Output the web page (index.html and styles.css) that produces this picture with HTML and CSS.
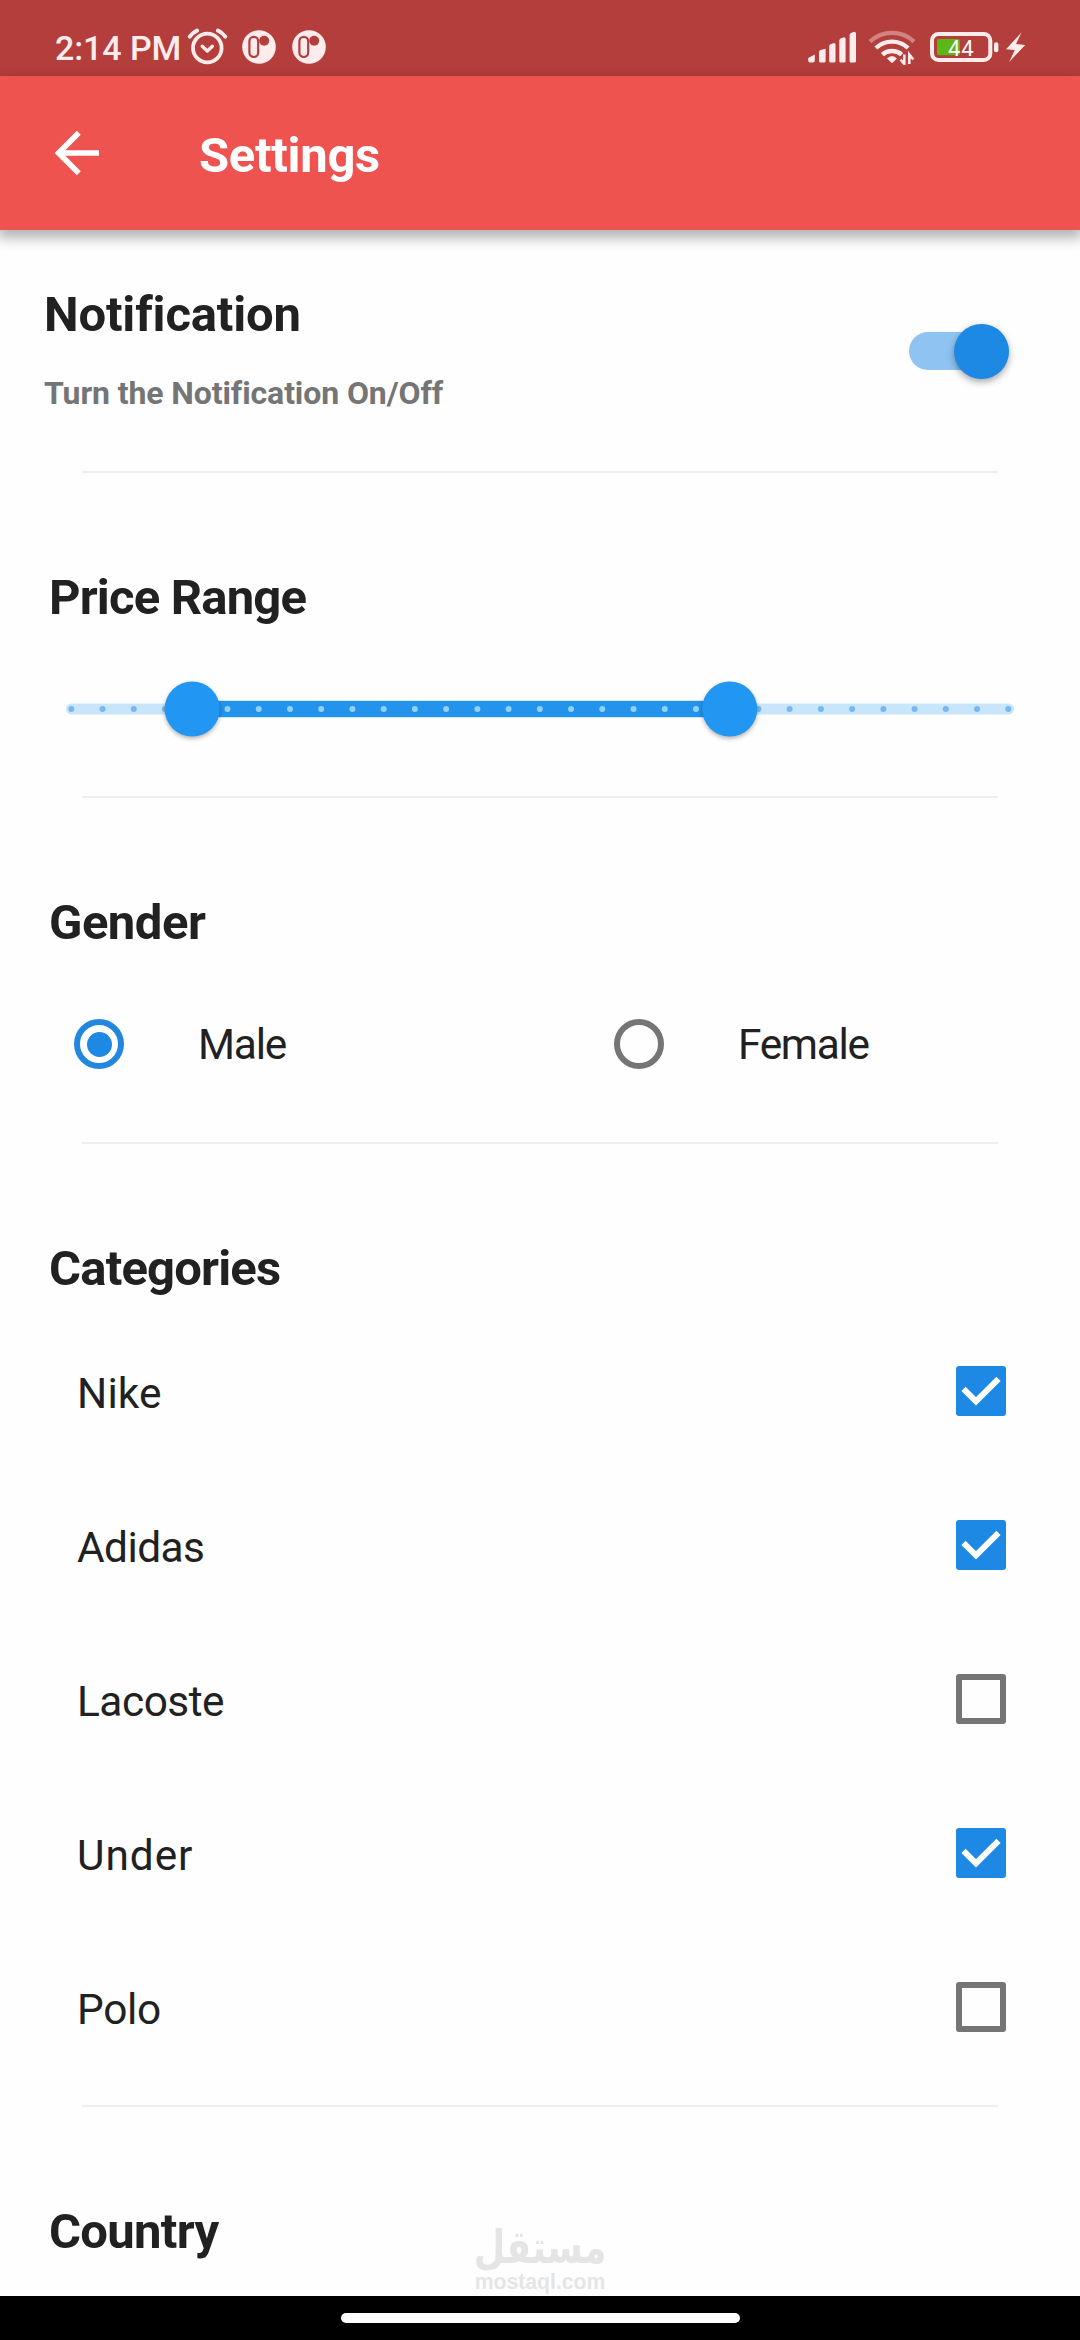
FILE: index.html
```html
<!DOCTYPE html>
<html lang="en">
<head>
<meta charset="utf-8">
<title>Settings</title>
<link rel="stylesheet" href="styles.css">
</head>
<body>
<div class="screen">
  <div class="status-bar">
    <div class="status-left">
      <span class="clock">2:14 PM</span>
      <svg class="alarm" width="42" height="38" viewBox="187 28 42 38" fill="none" stroke="currentColor" stroke-linecap="round" stroke-linejoin="round">
        <circle cx="207.3" cy="48" r="14.3" stroke-width="3.8"/>
        <path d="M189.8 36.6Q192.6 32.5 197 30.6M225.2 36.6Q222.4 32.5 218 30.6" stroke-width="4"/>
        <path d="M202.2 46.2L207.3 50.9L212.4 46.2" stroke-width="3.4"/>
      </svg>
      <svg class="app-dot" width="34" height="34" viewBox="0 0 34 34">
        <circle cx="17" cy="17" r="16.8" fill="currentColor"/>
        <rect x="7.4" y="6.8" width="8.8" height="20.2" rx="4.4" fill="none" stroke="#b33e3b" stroke-width="2.2"/>
        <circle cx="22.2" cy="10.7" r="5" fill="#b33e3b"/>
      </svg>
      <svg class="app-dot" width="34" height="34" viewBox="0 0 34 34">
        <circle cx="17" cy="17" r="16.8" fill="currentColor"/>
        <rect x="7.4" y="6.8" width="8.8" height="20.2" rx="4.4" fill="none" stroke="#b33e3b" stroke-width="2.2"/>
        <circle cx="22.2" cy="10.7" r="5" fill="#b33e3b"/>
      </svg>
    </div>
    <div class="status-right">
      <svg width="49" height="32" viewBox="808 31.5 49 32" fill="currentColor">
        <path d="M808.2 58.5L814.8 55V61.3Q814.8 63 813 63H810Q808.2 63 808.2 61.3Z"/>
        <path d="M819 52.5Q819 51 820.5 50.5L825.6 49.3V61.5Q825.6 63 824 63H820.5Q819 63 819 61.5Z"/>
        <path d="M829.2 47Q829.2 45.5 830.5 44.8L834 43.5Q835.5 43.5 835.5 45V61.5Q835.5 63 834 63H830.7Q829.2 63 829.2 61.5Z"/>
        <path d="M839.3 41Q839.3 39.8 840.5 39L844 37.8Q845.6 37.8 845.6 39.3V61.5Q845.6 63 844 63H840.8Q839.3 63 839.3 61.5Z"/>
        <path d="M849.6 35.5Q849.6 34.3 850.8 33.5L854 32.3Q856 32.3 856 34V61.5Q856 63 854.5 63H851Q849.6 63 849.6 61.5Z"/>
      </svg>
      <svg class="wifi" width="48" height="36" viewBox="868 30 48 36" fill="none" stroke="currentColor" stroke-width="4.4">
        <path d="M870 42.6A32 32 0 0 1 914 42.6" opacity=".4"/>
        <path d="M875.9 49A23.5 23.5 0 0 1 908.1 49"/>
        <path d="M882.3 55.6A14.8 14.8 0 0 1 901.7 55.6"/>
        <path d="M887 59.5Q892 54.5 897 59.5L892 64.2Z" fill="currentColor" stroke="none"/>
        <path d="M904.3 55.5V65L900.5 60.5M909.3 65V55.5L913.3 60.5" stroke-width="2.6"/>
      </svg>
      <svg class="battery" width="70" height="32" viewBox="929 31 70 32">
        <rect x="932" y="34" width="58.3" height="26" rx="6.5" fill="none" stroke="currentColor" stroke-width="4"/>
        <rect x="937" y="39" width="23" height="16.3" rx="2" fill="#5cb615"/>
        <rect x="994" y="42.3" width="4.4" height="10" rx="2.1" fill="currentColor"/>
        <text class="battery-level" x="948" y="55.7">44</text>
      </svg>
      <svg class="bolt" width="21" height="32" viewBox="1005 31.5 21 32" fill="currentColor">
        <path d="M1021.6 32.8L1006 49.8L1014.8 50.6L1009.2 62.4L1025.2 45.4L1016 44.6Z"/>
      </svg>
    </div>
  </div>

  <header class="app-bar">
    <svg class="back" width="46" height="46" viewBox="0 0 46 46" fill="none" stroke="#fff" stroke-width="5.6">
      <path d="M24.8 2.8L4.6 23L24.8 43.2M5 23H45"/>
    </svg>
    <h1 class="app-title">Settings</h1>
  </header>

  <main class="content">
    <section class="notification">
      <div class="notification-text">
        <h2 class="heading heading-notification">Notification</h2>
        <p class="subtitle">Turn the Notification On/Off</p>
      </div>
      <div class="switch"><div class="switch-thumb"></div></div>
    </section>
    <hr class="divider">

    <section class="section">
      <h2 class="heading heading-price">Price Range</h2>
      <svg class="slider" width="950" height="70" viewBox="65 674 950 70">
        <rect x="66" y="703.4" width="948" height="11.2" rx="5.6" fill="#c9e5fb"/>
        <path d="M71.3 709H1009" class="ticks ticks-inactive"/>
        <rect x="192" y="700.8" width="538" height="16.4" fill="#2393ec"/>
        <path d="M227.5 709H727" class="ticks ticks-active"/>
        <circle class="slider-thumb" cx="192.2" cy="709" r="27.6"/>
        <circle class="slider-thumb" cx="729.7" cy="709" r="27.6"/>
      </svg>
    </section>
    <hr class="divider">

    <section class="section">
      <h2 class="heading heading-gender">Gender</h2>
      <div class="radios">
        <div class="radio-option">
          <span class="radio radio-on"></span>
          <span class="label label-male">Male</span>
        </div>
        <div class="radio-option">
          <span class="radio"></span>
          <span class="label label-female">Female</span>
        </div>
      </div>
    </section>
    <hr class="divider">

    <section class="section">
      <h2 class="heading heading-categories">Categories</h2>
      <div class="categories">
        <div class="category">
          <span class="label label-nike">Nike</span>
          <span class="checkbox checked"><svg width="50" height="50" viewBox="0 0 50 50"><path d="M7.5 22.8L20 35.3L42.5 12.8"/></svg></span>
        </div>
        <div class="category">
          <span class="label label-adidas">Adidas</span>
          <span class="checkbox checked"><svg width="50" height="50" viewBox="0 0 50 50"><path d="M7.5 22.8L20 35.3L42.5 12.8"/></svg></span>
        </div>
        <div class="category">
          <span class="label label-lacoste">Lacoste</span>
          <span class="checkbox"></span>
        </div>
        <div class="category">
          <span class="label label-under">Under</span>
          <span class="checkbox checked"><svg width="50" height="50" viewBox="0 0 50 50"><path d="M7.5 22.8L20 35.3L42.5 12.8"/></svg></span>
        </div>
        <div class="category">
          <span class="label label-polo">Polo</span>
          <span class="checkbox"></span>
        </div>
      </div>
    </section>
    <hr class="divider">

    <section class="section">
      <h2 class="heading heading-country">Country</h2>
    </section>
  </main>

  <nav class="nav-bar"><div class="nav-pill"></div></nav>

  <div class="watermark">
    <div class="watermark-ar" lang="ar" dir="rtl">مستقل</div>
    <div class="watermark-en">mostaql.com</div>
  </div>
</div>
</body>
</html>
```
FILE: styles.css
```css
* { box-sizing: border-box; }

body {
  margin: 0;
  font-family: Roboto, "Liberation Sans", sans-serif;
  color: #212121;
  background: #fefefe;
}

svg { display: block; flex: none; }
h1, h2, p { margin: 0; }

.screen {
  position: relative;
  display: flex;
  flex-direction: column;
  width: 1080px;
  height: 2340px;
  overflow: hidden;
}

/* Status bar */
.status-bar {
  flex: none;
  display: flex;
  justify-content: space-between;
  align-items: center;
  height: 76px;
  padding: 18px 54px 0 55px;
  background: #b33e3b;
  color: #fdeceb;
}
.status-left, .status-right { display: flex; align-items: center; }
.clock {
  width: 132px;
  font-size: 34px;
  font-weight: 500;
  line-height: 40px;
  letter-spacing: -.1px;
  padding-top: 2px;
  white-space: nowrap;
}
.app-dot { margin-left: 13px; }
.app-dot + .app-dot { margin-left: 16px; }
.wifi { margin-left: 11px; }
.battery { margin-left: 13px; }
.bolt { margin-left: 6px; }
.battery-level { font-size: 22px; font-weight: 400; fill: #fff; letter-spacing: 1px; }

/* App bar */
.app-bar {
  position: relative;
  flex: none;
  display: flex;
  align-items: center;
  height: 154px;
  padding-left: 54px;
  background: #ef5350;
  box-shadow: 0 6px 12px 2px rgba(0, 0, 0, .3);
}
.app-title {
  margin-left: 99px;
  padding-top: 5px;
  font-size: 49px;
  line-height: 60px;
  font-weight: 700;
  letter-spacing: -.3px;
  color: #fff;
}

/* Content */
.content { flex: 1; min-height: 0; overflow: hidden; }
.divider { height: 2px; margin: 0 82px; border: 0; background: #eee; }
.section { padding-top: 95px; }
.heading {
  padding-left: 49px;
  font-size: 49px;
  line-height: 60px;
  font-weight: 700;
}
.notification {
  display: flex;
  justify-content: space-between;
  align-items: flex-start;
  height: 241px;
  padding: 55px 71px 0 44px;
}
.heading-notification { padding-left: 0; letter-spacing: -.15px; }
.subtitle {
  margin-top: 24px;
  font-size: 32px;
  line-height: 48px;
  font-weight: 700;
  letter-spacing: -.1px;
  color: #757575;
}
.heading-price { letter-spacing: -.83px; }
.heading-gender { letter-spacing: -.5px; }
.heading-categories { letter-spacing: -.82px; }
.heading-country { letter-spacing: -.7px; }

.switch {
  display: flex;
  align-items: center;
  justify-content: flex-end;
  width: 100px;
  height: 38px;
  margin-top: 47px;
  border-radius: 19px;
  background: #8fc4f2;
}
.switch-thumb {
  flex: none;
  width: 55px;
  height: 55px;
  border-radius: 50%;
  background: #1e88e5;
  box-shadow: 0 3px 7px rgba(0, 0, 0, .35);
}

.slider { margin: 46px 0 52px 65px; }
.ticks { fill: none; stroke-width: 6; stroke-linecap: round; stroke-dasharray: 0 31.233; }
.ticks-inactive { stroke: #78b8ee; }
.ticks-active { stroke: #90d2fb; }
.slider-thumb { fill: #2196f3; filter: drop-shadow(0 2px 2px rgba(0, 0, 0, .3)); }

.radios { display: grid; grid-template-columns: 540px 540px; padding: 60px 0 67px; }
.radio-option { display: flex; align-items: center; height: 62px; padding-left: 74px; }
.radio {
  display: grid;
  place-items: center;
  width: 50px;
  height: 50px;
  margin-right: 74px;
  border: 6px solid #757575;
  border-radius: 50%;
}
.radio-on { border-color: #2386df; }
.radio-on::after { content: ""; width: 25px; height: 25px; border-radius: 50%; background: #1e88e5; }
.radio-option .label { padding-top: 1px; }

.label { font-size: 42.4px; line-height: 54px; }
.label-male { letter-spacing: -1.2px; }
.label-female { letter-spacing: -1.3px; }
.label-nike { letter-spacing: .14px; }
.label-adidas { letter-spacing: -.55px; }
.label-lacoste { letter-spacing: -.48px; }
.label-under { letter-spacing: .95px; }
.label-polo { letter-spacing: -.3px; }

.categories { padding: 15px 0 21px; }
.category {
  display: flex;
  align-items: center;
  justify-content: space-between;
  height: 154px;
  padding: 0 74px 0 77px;
}
.category .label { padding-top: 5px; }
.checkbox { width: 50px; height: 50px; border: 6px solid #757575; border-radius: 3px; }
.checked { border: 0; background: #1e88e5; }
.checked path { fill: none; stroke: #fff; stroke-width: 6; }

/* Gesture bar */
.nav-bar {
  flex: none;
  display: flex;
  justify-content: center;
  height: 44px;
  padding-top: 17px;
  background: #000;
}
.nav-pill { width: 399px; height: 10px; border-radius: 5px; background: #fff; }

.watermark {
  position: absolute;
  left: 475px;
  top: 2224px;
  display: flex;
  flex-direction: column;
  align-items: center;
  width: 130px;
  color: #e5e5e5;
  white-space: nowrap;
}
.watermark-ar { font: 700 46px/46px "DejaVu Sans", sans-serif; transform: scaleX(.79); }
.watermark-en { font: 700 21.2px/24px "Liberation Sans", sans-serif; }
```
